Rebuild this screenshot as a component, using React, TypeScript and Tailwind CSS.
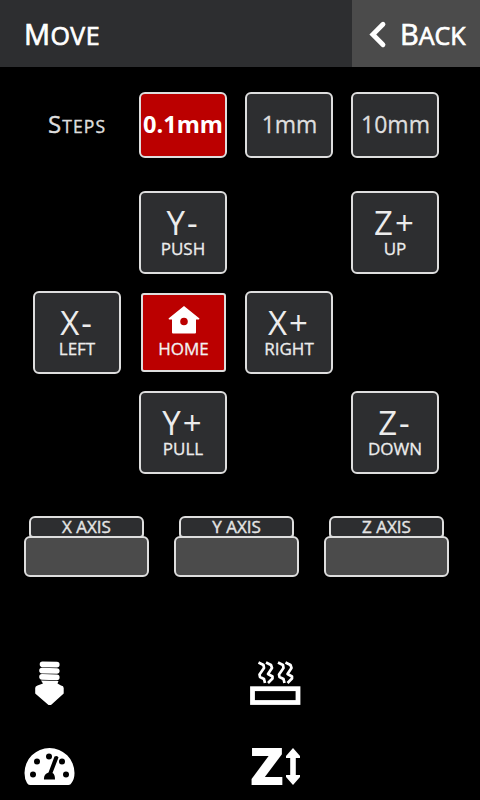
import React from "react";

function Key({ axis, label }: { axis: string; label: string }) {
  return (
    <button className="flex h-[83px] w-[88px] flex-col items-center rounded-[6px] border-2 border-[#dedede] bg-[#2d2e30] pt-[14px] text-[#ececec]">
      <span className="text-[33px] leading-[32px] tracking-[2px] whitespace-nowrap">{axis}</span>
      <span className="text-[17px] leading-[20px] whitespace-nowrap [-webkit-text-stroke:0.3px]">{label}</span>
    </button>
  );
}

function Step({ label, active }: { label: string; active?: boolean }) {
  return (
    <button
      className={
        "flex h-[66px] w-[88px] items-center justify-center rounded-[6px] border-2 border-[#dedede] pb-[1px] whitespace-nowrap " +
        (active
          ? "bg-[#bb0000] text-[23.6px] font-bold text-white"
          : "bg-[#2d2e30] pl-[1px] text-[23px] text-[#dedede] [-webkit-text-stroke:0.3px]")
      }
    >
      {label}
    </button>
  );
}

function Axis({ label }: { label: string }) {
  return (
    <div className="flex w-[125px] flex-col items-center">
      <div className="h-[22px] w-[115px] rounded-t-[6px] rounded-b-[4px] border-2 border-[#dedede] bg-[#2d2e30] text-center text-[17px] leading-[18px] text-[#e4e4e4] [-webkit-text-stroke:0.4px]">
        {label}
      </div>
      <div className="-mt-[2px] h-[41px] w-full rounded-[6px] border-2 border-[#dedede] bg-[#4b4b4b]" />
    </div>
  );
}

export default function App() {
  return (
    <div className="h-[800px] w-[480px] overflow-hidden bg-black font-['Open_Sans','Noto_Sans',sans-serif] text-white">
      <header className="flex h-[67px] bg-[#2d2e30]">
        <h1 className="w-[352px] pl-[24px] text-[25px] leading-[67px] tracking-[0.4px] uppercase [-webkit-text-stroke:0.7px] first-letter:text-[29px]">
          Move
        </h1>
        <button className="flex w-[128px] bg-[#4b4b4b] pl-[16px]">
          <svg
            className="mt-[20px] h-[30px] w-[20px]"
            viewBox="0 0 20 30"
            fill="none"
            stroke="#fff"
            strokeWidth="4.8"
            strokeLinecap="round"
          >
            <path d="M15 4.300 L4.800 14.500 L15 24.700" />
          </svg>
          <span className="ml-[12px] block text-[25px] leading-[67px] uppercase [-webkit-text-stroke:0.7px] first-letter:text-[29px]">
            Back
          </span>
        </button>
      </header>

      <div className="mt-[25px] ml-[33px] grid grid-cols-[88px_88px_88px_88px] gap-x-[18px]">
        <div className="pl-[15px] text-[17.5px] leading-[63px] tracking-[1.1px] text-[#dedede] uppercase [-webkit-text-stroke:0.4px] first-letter:text-[24px]">
          Steps
        </div>
        <Step label="0.1mm" active />
        <Step label="1mm" />
        <Step label="10mm" />
      </div>

      <div className="mt-[33px] ml-[33px] grid grid-cols-[88px_88px_88px_88px] gap-x-[18px] gap-y-[17px]">
        <div />
        <Key axis="Y-" label="PUSH" />
        <div />
        <Key axis="Z+" label="UP" />
        <Key axis="X-" label="LEFT" />
        <button className="mt-[2px] ml-[2px] flex h-[79px] w-[85px] flex-col items-center rounded-[3px] border-2 border-[#dedede] bg-[#bb0000] pt-[11px] text-[#f2f2f2]">
          <svg className="h-[28px] w-[32px]" viewBox="0 0 32 28" fill="#fff">
            <path
              fillRule="evenodd"
              d="M16 0 L31.500 12.500 L31 13.500 H28 V26.500 Q28 27.500 27 27.500 H5 Q4 27.500 4 26.500 V13.500 H1 L0.500 12.500 Z M16 11.700 a3.800 3.800 0 1 0 0 7.600 a3.800 3.800 0 1 0 0 -7.600 Z"
            />
          </svg>
          <span className="mt-[5px] text-[17px] leading-[20px] [-webkit-text-stroke:0.3px]">HOME</span>
        </button>
        <Key axis="X+" label="RIGHT" />
        <div />
        <div />
        <Key axis="Y+" label="PULL" />
        <div />
        <Key axis="Z-" label="DOWN" />
      </div>

      <div className="mt-[42px] ml-[24px] flex gap-[25px]">
        <Axis label="X AXIS" />
        <Axis label="Y AXIS" />
        <Axis label="Z AXIS" />
      </div>

      <div className="mt-[81px] ml-[24px] grid grid-cols-[226px_60px] gap-y-[32px]">
        <svg className="h-[54px] w-[52px]" viewBox="0 0 52 54">
          <g fill="none" stroke="#fff" strokeWidth="5.600" strokeLinecap="round">
            <path d="M18.500 6.400 L32.800 6.600" />
            <path d="M18 12.600 L32.800 13" />
            <path d="M18 18.900 L32.800 19.400" />
          </g>
          <path
            fill="#fff"
            d="M17 22.600 L34.500 23 L33.500 25.500 L37 27.500 Q39.700 27.800 39.700 30 V35.500 L27 47 H24.500 L11.200 35.500 V30 Q11.200 28 13.500 27.500 L19 25.500 Z"
          />
        </svg>
        <svg className="h-[54px] w-[52px]" viewBox="0 0 52 54" fill="none" stroke="#fff">
          <path
            strokeWidth="2.7"
            strokeLinejoin="round"
            d="M8.500 4.500 L13.500 7 L14 10 L9.500 16.500 L10 19 L14 21 L15 25 M16 4.500 L21 7 L22 10 L18 16 L22.500 18.500 L22.500 20.500 L18 25 M28 4.500 L33 7 L33.500 10 L29 16.500 L29.500 19 L33.500 21 L34.500 25 M35.500 4.500 L40.500 7 L41.500 10 L37.500 16 L42 18.500 L42 20.500 L37.500 25"
          />
          <rect x="2.500" y="30.700" width="45.500" height="13.800" strokeWidth="4.800" />
        </svg>
        <svg className="h-[54px] w-[52px]" viewBox="0 0 52 54" fill="#fff">
          <path d="M25.500 4 A25 25 0 0 1 50.500 29 Q50.500 35 47.500 39 Q46.500 41 44.500 41 H6 Q4 41 3 39 Q0.500 35 0.500 29 A25 25 0 0 1 25.500 4 Z" />
          <g fill="#000">
            <circle cx="9" cy="30.500" r="3" />
            <circle cx="13" cy="17.500" r="3" />
            <circle cx="25" cy="12.500" r="3" />
            <circle cx="38" cy="17.500" r="3" />
            <circle cx="42" cy="30.500" r="3" />
            <path d="M30.500 12.500 Q33.500 11 34.500 13.500 L28.500 29 Q31 30 31 35.500 H20 Q19.500 30 24.500 28.500 Z" />
          </g>
        </svg>
        <div className="flex h-[54px] w-[52px]">
          <span className="w-[34px] shrink-0 origin-left scale-x-[1.08] text-[51px] leading-[43px] font-extrabold">Z</span>
          <svg className="h-[54px] w-[18px] shrink-0" viewBox="0 0 18 54" fill="#fff">
            <path d="M9 4 L16 12 V14 H11.800 V31 H16 V33 L9 41 L2 33 V31 H6.200 V14 H2 V12 Z" />
          </svg>
        </div>
      </div>
    </div>
  );
}
